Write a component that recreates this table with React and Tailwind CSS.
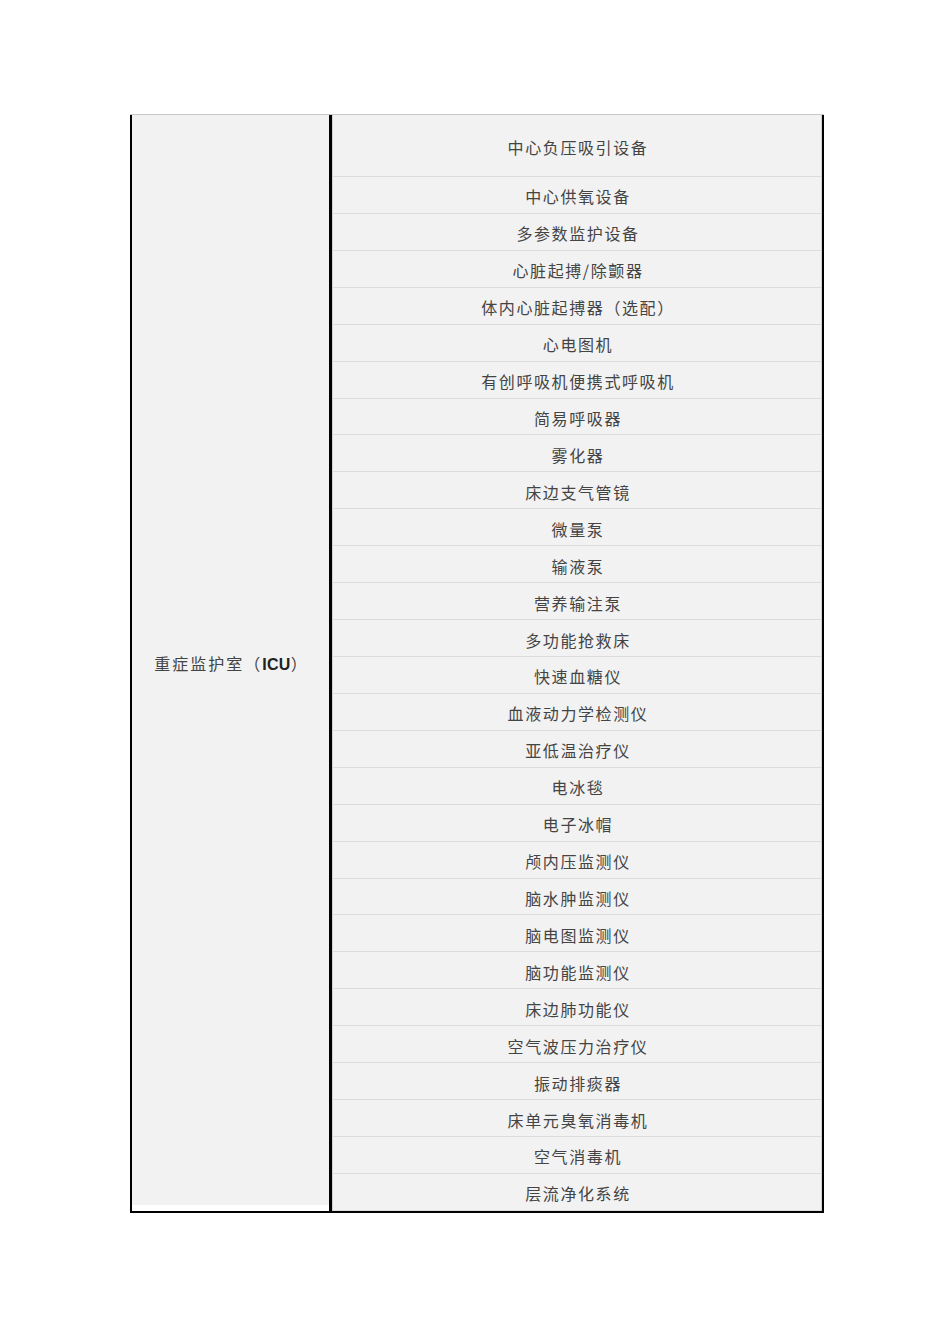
import React from "react";

const items = [
  "中心供氧设备",
  "多参数监护设备",
  "心脏起搏/除颤器",
  "体内心脏起搏器（选配）",
  "心电图机",
  "有创呼吸机便携式呼吸机",
  "简易呼吸器",
  "雾化器",
  "床边支气管镜",
  "微量泵",
  "输液泵",
  "营养输注泵",
  "多功能抢救床",
  "快速血糖仪",
  "血液动力学检测仪",
  "亚低温治疗仪",
  "电冰毯",
  "电子冰帽",
  "颅内压监测仪",
  "脑水肿监测仪",
  "脑电图监测仪",
  "脑功能监测仪",
  "床边肺功能仪",
  "空气波压力治疗仪",
  "振动排痰器",
  "床单元臭氧消毒机",
  "空气消毒机",
  "层流净化系统",
];

const font = { fontFamily: '"Noto Sans CJK SC", "Noto Sans", sans-serif' };

export default function App() {
  return (
    <div className="w-[950px] h-[1344px] bg-white pt-[114px] pl-[130px]" style={font}>
      <div className="w-[694px] flex flex-col">
        <div className="flex border-t border-[#c8c8c8]">
          {/* left cell */}
          <div className="w-[199px] border-l-2 border-black flex flex-col">
            <div className="flex-1 bg-[#f2f2f2] flex items-center justify-center pt-[8px]">
              <span className="text-[16px] tracking-[2px] text-[#444444] leading-none pl-[2px]">
                重症监护室（<span className="font-bold tracking-[0.3px] text-[#222222]" style={{ fontFamily: '"Liberation Sans", Arial, sans-serif' }}>ICU</span>）
              </span>
            </div>
            <div className="h-[6px] bg-white" />
          </div>
          {/* right column */}
          <div className="flex-1 border-l-[3px] border-black">
            <div className="border-l border-r border-[#d0d0d0] bg-[#f2f2f2]">
              <div className="h-[62px] border-b border-[#dcdcdc] flex items-center justify-center pt-[3px] pl-[2px] text-[16px] tracking-[1.6px] text-[#444444]">
                中心负压吸引设备
              </div>
              {items.map((t) => (
                <div
                  key={t}
                  className="h-[36.93px] border-b border-[#dcdcdc] flex items-center justify-center pt-[3px] pl-[2px] text-[16px] tracking-[1.6px] text-[#444444]"
                >
                  {t}
                </div>
              ))}
            </div>
          </div>
          <div className="w-[2px] bg-black" />
        </div>
        <div className="h-[2px] bg-black" />
      </div>
    </div>
  );
}
